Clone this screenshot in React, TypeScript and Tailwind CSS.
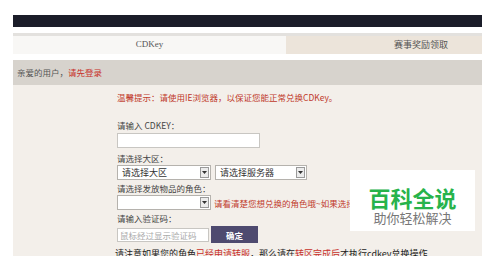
import React from "react";

const cjk = { fontFamily: '"Noto Sans CJK SC", "Noto Sans", sans-serif' };

function Select({ label, width }: { label: string; width: string }) {
  return (
    <div className={`flex h-[15px] items-center justify-between border border-[#b5b2ad] bg-white pl-[4px] pr-[1px] ${width}`}>
      <span className="text-[9px] leading-none text-[#333]">{label}</span>
      <span className="flex h-[11px] w-[9px] items-center justify-center border border-[#9a9a9a] bg-[#ececec]">
        <svg width="5" height="3" viewBox="0 0 5 3">
          <path d="M0 0h5L2.5 3z" fill="#333" />
        </svg>
      </span>
    </div>
  );
}

export default function App() {
  return (
    <div className="relative h-[256px] w-[500px] overflow-hidden bg-white" style={cjk}>
      <div className="ml-[13px] w-[469px]">
        <div className="mt-[15px] h-[12px] bg-[#1b1d29]" />
        <div className="mt-[6px] h-[3px] bg-[#e3e1de]" />
        <div className="flex h-[18px] text-[9px]">
          <div className="flex w-[273px] items-center justify-center bg-[#f8f7f5] text-[#555]" style={{ fontFamily: '"Liberation Serif", serif' }}>
            CDKey
          </div>
          <div className="flex flex-1 items-center bg-[#ece4da] pl-[108px] text-[#555]">赛事奖励领取</div>
        </div>
        <div className="mt-[6px] flex h-[25px] items-center bg-[#d7d3cd] pl-[4px] text-[8.5px]">
          <span className="text-[#555]">亲爱的用户，</span>
          <span className="text-[#c8312b]">请先登录</span>
        </div>
        <div className="h-[200px] bg-[#f3efea] pl-[104px] pt-[7px] text-[8.5px] leading-[10px] text-[#444]">
          <div className="text-[#c0392b]">温馨提示：请使用IE浏览器，以保证您能正常兑换CDKey。</div>
          <div className="mt-[18px]">请输入 CDKEY：</div>
          <div className="mt-[3px] h-[15px] w-[143px] border border-[#c8c6c2] bg-white" />
          <div className="mt-[5px]">请选择大区：</div>
          <div className="mt-[2px] flex gap-[4px]">
            <Select label="请选择大区" width="w-[94px]" />
            <Select label="请选择服务器" width="w-[92px]" />
          </div>
          <div className="mt-[3px]">请选择发放物品的角色：</div>
          <div className="mt-[2px] flex items-center gap-[3px]">
            <Select label="" width="w-[94px]" />
            <span className="whitespace-nowrap text-[#c0392b]">请看清楚您想兑换的角色哦~如果选择错误将无法更改</span>
          </div>
          <div className="mt-[3px]">请输入验证码：</div>
          <div className="mt-[3px] flex items-center gap-[2px]">
            <div className="flex h-[14px] w-[92px] items-center border border-[#c8c6c2] bg-white pl-[2px] text-[#aaa]">鼠标经过显示验证码</div>
            <button className="h-[17px] w-[47px] bg-[#4e4a6f] text-[8.5px] font-bold text-white">确定</button>
          </div>
          <div className="mt-[6px] -ml-[2px] whitespace-nowrap text-[9px] text-[#222]">
            请注意如果您的角色<span className="text-[#c8312b]">已经申请转服</span>，那么请在<span className="text-[#c8312b]">转区完成后</span>才执行cdkey兑换操作
          </div>
        </div>
      </div>
      <div className="absolute left-[350px] top-[170px] flex h-[61px] w-[125px] flex-col items-center bg-white pt-[16px]">
        <div className="text-[22px] font-bold leading-[22px] text-[#27b34b]">百科全说</div>
        <div className="mt-[2px] text-[13px] leading-[16px] text-[#777]">助你轻松解决</div>
      </div>
    </div>
  );
}
